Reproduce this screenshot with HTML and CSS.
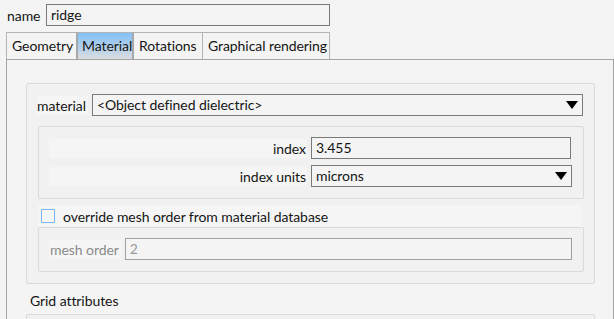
FILE: index.html
```html
<!DOCTYPE html>
<html>
<head>
<meta charset="utf-8">
<link rel="stylesheet" href="styles.css">
</head>
<body>
<div class="name-row">
  <span class="name-label">name</span>
  <div class="field name-field">ridge</div>
</div>
<div class="tabs">
  <div class="tab">Geometry</div>
  <div class="tab active">Material</div>
  <div class="tab">Rotations</div>
  <div class="tab">Graphical rendering</div>
</div>
<div class="pane">
  <div class="group">
    <div class="row material-row">
      <span class="lbl">material</span>
      <div class="field combo"><span>&lt;Object defined dielectric&gt;</span><span class="arrow"></span></div>
    </div>
    <div class="box inner">
      <div class="row form-row">
        <span class="lbl right">index</span>
        <div class="field val">3.455</div>
      </div>
      <div class="row form-row">
        <span class="lbl right">index units</span>
        <div class="field val combo"><span>microns</span><span class="arrow"></span></div>
      </div>
    </div>
    <div class="check-row">
      <span class="checkbox"></span>
      <span class="check-text">override mesh order from material database</span>
    </div>
    <div class="box mesh">
      <div class="row">
        <span class="lbl disabled">mesh order</span>
        <div class="field disabled-field">2</div>
      </div>
    </div>
  </div>
  <div class="section-title">Grid attributes</div>
  <div class="group next"></div>
</div>
</body>
</html>
```
FILE: styles.css
```css
html, body {
  margin: 0;
  padding: 0;
  background: #f4f4f4;
  font-family: Lato, "Noto Sans", sans-serif;
  font-size: 14px;
  letter-spacing: -0.07px;
  color: #151515;
  overflow: hidden;
  height: 319px;
}
.name-row {
  display: flex;
  align-items: center;
  padding: 4px 0 0 7px;
  height: 22px;
}
.name-label {
  width: 39px;
}
.field {
  box-sizing: border-box;
  height: 22px;
  border: 1px solid #7a7a7a;
  background: #f4f4f4;
  padding: 0 4px;
  display: flex;
  align-items: center;
  line-height: 20px;
  white-space: nowrap;
}
.name-field {
  width: 284px;
}
.tabs {
  display: flex;
  margin: 6px 0 0 6px;
  height: 27px;
}
.tab {
  box-sizing: border-box;
  border: 1px solid #b4b4b4;
  border-bottom: none;
  border-right: none;
  padding: 0 0 1px 5px;
  display: flex;
  align-items: center;
  background: #f4f4f4;
  white-space: nowrap;
}
.tab:last-child {
  border-right: 1px solid #b4b4b4;
}
.tab:nth-child(1) { width: 70px; }
.tab:nth-child(2) { width: 58px; }
.tab:nth-child(3) { width: 68px; }
.tab:nth-child(4) { width: 128px; }
.tab.active {
  background: linear-gradient(#82c0f7, #dadde1);
  border-left: 2px solid #a8a8a8;
  border-right: 2px solid #a8a8a8;
  padding-left: 4px;
}
.tab.active + .tab {
  border-left: none;
}
.pane {
  box-sizing: border-box;
  margin-left: 6px;
  width: 608px;
  height: 260px;
  border: 1px solid #a4a4a4;
  border-bottom: none;
  padding: 23px 18px 0 19px;
  overflow: hidden;
}
.group {
  box-sizing: border-box;
  width: 569px;
  height: 201px;
  border: 1px solid #dadada;
  border-radius: 2px;
  background: #f1f1f1;
  padding: 10px 11px 0 10px;
  display: flex;
  flex-direction: column;
}
.row {
  display: flex;
  align-items: center;
  height: 22px;
}
.lbl {
  background: #f5f5f5;
  height: 19px;
  line-height: 19px;
  padding: 0 1px;
  margin-right: 4px;
  white-space: nowrap;
}
.material-row .lbl {
  padding: 0 2px 0 0;
}
.combo {
  flex: 1;
  justify-content: space-between;
}
.arrow {
  width: 0;
  height: 0;
  border-left: 6px solid transparent;
  border-right: 6px solid transparent;
  border-top: 8px solid #000;
  margin-right: 0;
}
.box {
  box-sizing: border-box;
  border: 1px solid #dadada;
  border-radius: 2px;
  background: #f1f1f1;
  margin-left: 1px;
  width: 546px;
}
.inner {
  margin-top: 10px;
  height: 73px;
  padding: 10px 11px 0 10px;
  display: flex;
  flex-direction: column;
  gap: 6px;
}
.form-row .lbl.right {
  width: 258px;
  text-align: right;
  box-sizing: border-box;
  padding-right: 1px;
  margin-right: 4px;
}
.val {
  width: 260px;
}
.check-row {
  margin-top: 6px;
  margin-left: 1px;
  width: 544px;
  height: 22px;
  background: #f5f5f5;
  display: flex;
  align-items: center;
}
.checkbox {
  box-sizing: border-box;
  width: 14px;
  height: 14px;
  border: 1px solid #78b7f0;
  background: #f7f7f7;
  margin: 0 8px 0 3px;
}
.mesh {
  height: 45px;
  padding: 10px 11px 0 10px;
}
.lbl.disabled {
  color: #8a8a8a;
  padding-right: 2px;
  margin-right: 4px;
}
.disabled-field {
  flex: 1;
  color: #9a9a9a;
  border-color: #a0a0a0;
  padding-left: 4px;
}
.section-title {
  margin: 7px 0 0 4px;
  height: 20px;
  line-height: 20px;
}
.group.next {
  margin-top: 3px;
  height: 20px;
}
```
